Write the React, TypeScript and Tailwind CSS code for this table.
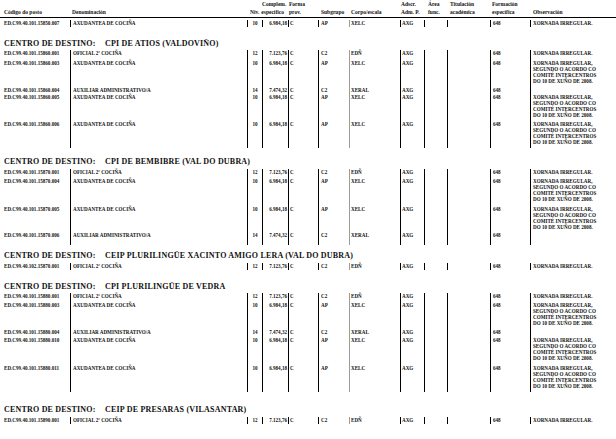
import React from "react";

// Páxina escaneada: relación de postos por centro de destino.

type Kind = "ofi" | "axu" | "aux";

const JOBS: Record<Kind, { name: string; niv: string; compl: string; sub: string; corpo: string }> = {
  ofi: { name: "OFICIAL 2ª COCIÑA", niv: "12", compl: "7.123,76", sub: "C2", corpo: "EDÑ" },
  axu: { name: "AXUDANTEA DE COCIÑA", niv: "10", compl: "6.984,18", sub: "AP", corpo: "XELC" },
  aux: { name: "AUXILIAR ADMINISTRATIVO/A", niv: "14", compl: "7.474,32", sub: "C2", corpo: "XERAL" },
};

const OBS_ONE = ["XORNADA IRREGULAR."];
const OBS_FOUR = [
  "XORNADA IRREGULAR,",
  "SEGUNDO O ACORDO CO",
  "COMITÉ INTERCENTROS",
  "DO 10 DE XUÑO DE 2008.",
];

interface Row {
  code: string;
  kind: Kind;
  obs: string[];
  h: string; // clase de altura
}

interface Section {
  title?: string;
  headMt: string;
  blockMt: string;
  rows: Row[];
}

const SECTIONS: Section[] = [
  {
    headMt: "mt-0",
    blockMt: "mt-[2px]",
    rows: [{ code: "ED.C99.40.101.15850.007", kind: "axu", obs: OBS_ONE, h: "h-[7px]" }],
  },
  {
    title: "CPI DE ATIOS (VALDOVIÑO)",
    headMt: "mt-[12px]",
    blockMt: "mt-[1px]",
    rows: [
      { code: "ED.C99.40.101.15860.001", kind: "ofi", obs: OBS_ONE, h: "h-[10px]" },
      { code: "ED.C99.40.101.15860.003", kind: "axu", obs: OBS_FOUR, h: "h-[27px]" },
      { code: "ED.C99.40.101.15860.004", kind: "aux", obs: [], h: "h-[7px]" },
      { code: "ED.C99.40.101.15860.005", kind: "axu", obs: OBS_FOUR, h: "h-[27px]" },
      { code: "ED.C99.40.101.15860.006", kind: "axu", obs: OBS_FOUR, h: "h-[27px]" },
    ],
  },
  {
    title: "CPI DE BEMBIBRE (VAL DO DUBRA)",
    headMt: "mt-[9px]",
    blockMt: "mt-[2px]",
    rows: [
      { code: "ED.C99.40.101.15870.001", kind: "ofi", obs: OBS_ONE, h: "h-[9px]" },
      { code: "ED.C99.40.101.15870.004", kind: "axu", obs: OBS_FOUR, h: "h-[28px]" },
      { code: "ED.C99.40.101.15870.005", kind: "axu", obs: OBS_FOUR, h: "h-[26px]" },
      { code: "ED.C99.40.101.15870.006", kind: "aux", obs: [], h: "h-[13px]" },
    ],
  },
  {
    title: "CEIP PLURILINGÜE XACINTO AMIGO LERA (VAL DO DUBRA)",
    headMt: "mt-[6px]",
    blockMt: "mt-[2px]",
    rows: [{ code: "ED.C99.40.102.15870.001", kind: "ofi", obs: OBS_ONE, h: "h-[7px]" }],
  },
  {
    title: "CPI PLURILINGÜE DE VEDRA",
    headMt: "mt-[12px]",
    blockMt: "mt-[1px]",
    rows: [
      { code: "ED.C99.40.101.15880.001", kind: "ofi", obs: OBS_ONE, h: "h-[9px]" },
      { code: "ED.C99.40.101.15880.003", kind: "axu", obs: OBS_FOUR, h: "h-[27px]" },
      { code: "ED.C99.40.101.15880.004", kind: "aux", obs: [], h: "h-[8px]" },
      { code: "ED.C99.40.101.15880.010", kind: "axu", obs: OBS_FOUR, h: "h-[28px]" },
      { code: "ED.C99.40.101.15880.011", kind: "axu", obs: OBS_FOUR, h: "h-[27px]" },
    ],
  },
  {
    title: "CEIP DE PRESARAS (VILASANTAR)",
    headMt: "mt-[13px]",
    blockMt: "mt-[2px]",
    rows: [{ code: "ED.C99.40.101.15890.001", kind: "ofi", obs: OBS_ONE, h: "h-[7px]" }],
  },
];

const BAR = "border-l border-black";

function DataRow({ row }: { row: Row }) {
  const j = JOBS[row.kind];
  return (
    <div className={`flex ${row.h} leading-[5px]`}>
      <div className="w-[70px] shrink-0 whitespace-nowrap pl-[4px] pt-[1px]">{row.code}</div>
      <div className={`w-[177px] shrink-0 pl-[2px] pt-[1px] ${BAR}`}>{j.name}</div>
      <div className={`w-[15px] shrink-0 pt-[1px] text-center ${BAR}`}>{j.niv}</div>
      <div className={`w-[26px] shrink-0 whitespace-nowrap pr-[1px] pt-[1px] text-right ${BAR}`}>{j.compl}</div>
      <div className={`w-[30px] shrink-0 pl-[1px] pt-[1px] ${BAR}`}>C</div>
      <div className={`w-[31px] shrink-0 pl-[2px] pt-[1px] ${BAR}`}>{j.sub}</div>
      <div className="w-[51px] shrink-0 border-l-[1.5px] border-[#9c9c9c] pl-[1px] pt-[1px]">{j.corpo}</div>
      <div className={`w-[24px] shrink-0 pl-[1px] pt-[1px] ${BAR}`}>AXG</div>
      <div className={`w-[23px] shrink-0 ${BAR}`} />
      <div className={`w-[43px] shrink-0 ${BAR}`} />
      <div className={`w-[40px] shrink-0 pl-[2px] pt-[1px] ${BAR}`}>648</div>
      <div className={`flex-1 whitespace-nowrap pl-[2px] pt-[1px] ${BAR}`}>
        {row.obs.map((l) => (
          <div key={l} className="h-[6px] leading-[5px]">
            {l}
          </div>
        ))}
      </div>
    </div>
  );
}

function HeaderCell({ w, pl, top, bottom }: { w: string; pl: string; top?: string; bottom: string }) {
  return (
    <div className={`${w} ${pl} shrink-0 whitespace-nowrap`}>
      <div className="h-[9px] leading-[8px]">{top ?? ""}</div>
      <div className="h-[8px] leading-[7px]">{bottom}</div>
    </div>
  );
}

export default function App() {
  return (
    <div
      className="h-[439px] w-[616px] overflow-hidden bg-white font-bold text-[#111]"
      style={{ fontFamily: '"Liberation Serif", "Times New Roman", serif' }}
    >
      <div className="flex h-[18px] border-b border-black text-[5.5px]">
        <HeaderCell w="w-[70px]" pl="pl-[4px]" bottom="Código do posto" />
        <HeaderCell w="w-[177px]" pl="pl-[2px]" bottom="Denominación" />
        <div className="flex w-[41px] shrink-0 flex-col whitespace-nowrap">
          <div className="h-[9px] pl-[15px] leading-[8px]">Complem.</div>
          <div className="flex h-[8px] leading-[7px]">
            <span className="pl-[3px]">Niv.</span>
            <span className="pl-[2px]">específico</span>
          </div>
        </div>
        <HeaderCell w="w-[30px]" pl="pl-[1px]" top="Forma" bottom="prov." />
        <HeaderCell w="w-[31px]" pl="pl-[3px]" bottom="Subgrupo" />
        <HeaderCell w="w-[51px]" pl="pl-[2px]" bottom="Corpo/escala" />
        <HeaderCell w="w-[24px]" pl="pl-[1px]" top="Adscr." bottom="Adm. P." />
        <HeaderCell w="w-[23px]" pl="pl-[4px]" top="Área" bottom="func." />
        <HeaderCell w="w-[43px]" pl="pl-[3px]" top="Titulación" bottom="académica" />
        <HeaderCell w="w-[40px]" pl="pl-[2px]" top="Formación" bottom="específica" />
        <HeaderCell w="w-[86px]" pl="pl-[3px]" bottom="Observación" />
      </div>

      {SECTIONS.map((s, i) => (
        <div key={i}>
          {s.title && (
            <div className={`${s.headMt} flex h-[10px] items-center pl-[4px] text-[8px] leading-[10px] tracking-[0.2px]`}>
              <span className="w-[101px] shrink-0">CENTRO DE DESTINO:</span>
              <span>{s.title}</span>
            </div>
          )}
          <div className={`${s.blockMt} text-[5.1px]`}>
            {s.rows.map((r) => (
              <DataRow key={r.code} row={r} />
            ))}
          </div>
        </div>
      ))}
    </div>
  );
}
